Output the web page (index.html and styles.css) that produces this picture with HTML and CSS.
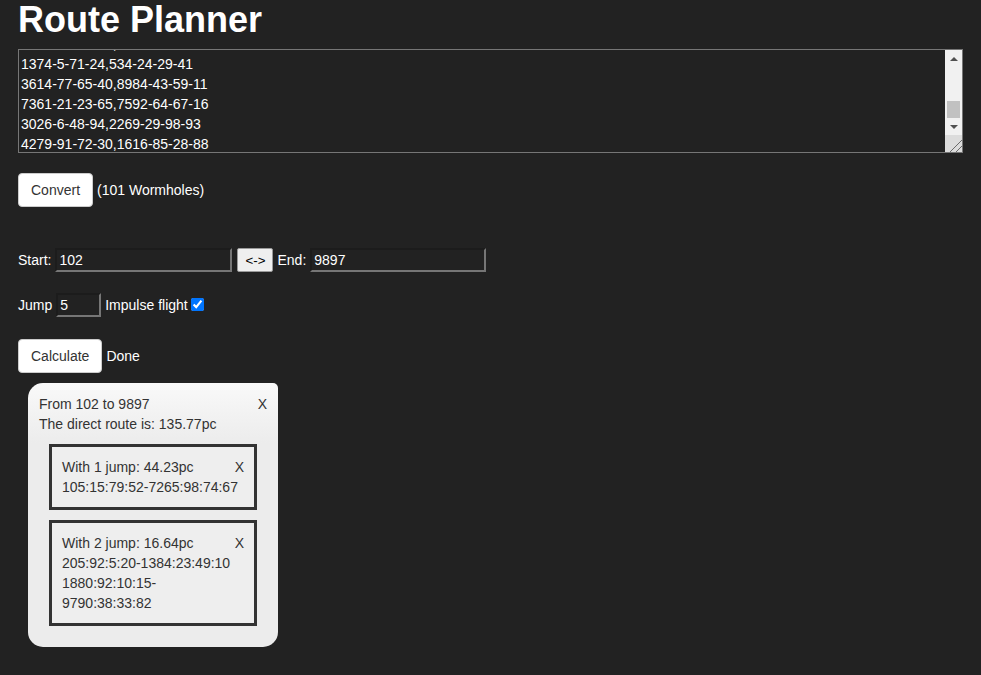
FILE: index.html
```html
<!DOCTYPE html>
<html lang="en">
<head>
<meta charset="utf-8">
<title>Route Planner</title>
<link rel="stylesheet" href="styles.css">
</head>
<body>
<h1 class="title">Route Planner</h1>
<div class="ta-wrap">
<textarea class="wormholes" spellcheck="false">5531-12-44-87,2290-61-03-55
8812-40-17-29,1043-77-92-36
6205-83-58-11,4718-26-39-70
2967-05-66-48,9134-52-81-07
3380-91-24-63,7756-18-45-92
1249-37-80-16,6602-94-13-58
9471-62-09-35,2815-41-76-23
4053-28-97-74,8390-65-30-49
7718-14-53-86,1547-89-22-61
2634-79-41-02,5981-33-68-14
8126-56-85-30,3472-07-59-88
5309-43-12-97,9264-71-36-25
1795-88-64-51,4033-19-90-42
6642-25-37-09,7128-56-04-83
3987-70-81-26,2556-38-47-71
9215-04-29-68,6891-82-15-37
4468-97-72-43,1307-24-63-90
7031-31-06-85,8745-67-98-12
2580-59-48-17,5196-03-26-64
8853-16-93-54,3629-95-71-08
1162-84-25-79,7480-49-37-96
5727-42-60-33,9912-11-84-57
3046-69-14-92,6275-76-52-20
9598-27-87-65,2139-58-09-43
4351-93-38-06,8017-35-66-81
7884-08-71-40,4562-87-23-19
2209-66-52-97,1698-14-80-62
6637-21-19-74,9341-72-45-05
1473-75-96-28,5827-29-61-93
8095-50-33-61,3754-96-18-47
3822-13-67-84,7203-45-94-26
5168-86-45-19,2476-63-37-70
9740-39-08-52,6089-08-75-34
4587-64-82-37,8632-51-14-99
1374-5-71-24,534-24-29-41
3614-77-65-40,8984-43-59-11
7361-21-23-65,7592-64-67-16
3026-6-48-94,2269-29-98-93
4279-91-72-30,1616-85-28-88</textarea>
<div class="vscroll" aria-hidden="true">
  <span class="sb-btn sb-up"></span>
  <span class="sb-track"><span class="sb-thumb"></span></span>
  <span class="sb-btn sb-down"></span>
  <span class="sb-corner"></span>
</div>
</div>

<div class="row convert-row">
  <button class="btn" type="button">Convert</button>
  <span class="info">(101 Wormholes)</span>
</div>

<div class="row endpoints">
  <label class="field-label" for="start">Start:</label>
  <input class="text-input wide" id="start" type="text" value="102">
  <button class="swap" type="button">&lt;-&gt;</button>
  <label class="field-label" for="end">End:</label>
  <input class="text-input wide end" id="end" type="text" value="9897">
</div>

<div class="row jump-row">
  <label class="field-label" for="jump">Jump</label>
  <input class="text-input narrow" id="jump" type="text" value="5">
  <label class="impulse">Impulse flight<input class="check" type="checkbox" checked></label>
</div>

<div class="row calc-row">
  <button class="btn" type="button">Calculate</button>
  <span class="info">Done</span>
</div>

<div class="result">
  <div class="result-head">
    <span class="close">X</span>
    <div>From 102 to 9897</div>
    <div>The direct route is: 135.77pc</div>
  </div>
  <div class="route">
    <span class="close">X</span>
    <div>With 1 jump: 44.23pc</div>
    <div>105:15:79:52-7265:98:74:67</div>
  </div>
  <div class="route">
    <span class="close">X</span>
    <div>With 2 jump: 16.64pc</div>
    <div>205:92:5:20-1384:23:49:10 1880:92:10:15-9790:38:33:82</div>
  </div>
</div>
<script src="script.js"></script>
</body>
</html>
```

FILE: styles.css
```css
html, body {
  background: #222222;
}
body {
  margin: 0;
  padding: 0 18px;
  color: #ffffff;
  font-family: "Liberation Sans", Arial, sans-serif;
  font-size: 14px;
  line-height: 20px;
}
.title {
  margin: 0;
  font-size: 36px;
  line-height: 40px;
  font-weight: bold;
}
.ta-wrap {
  position: relative;
  margin-top: 9px;
}
.wormholes {
  display: block;
  box-sizing: border-box;
  width: 100%;
  height: 104px;
  margin: 0;
  padding: 1px 19px 0 2px;
  border: 1px solid #767676;
  background: #222222;
  color: #ffffff;
  font-family: "Liberation Sans", Arial, sans-serif;
  font-size: 14px;
  line-height: 20px;
  white-space: pre;
  overflow-y: scroll;
  scrollbar-width: none;
  resize: none;
}
.vscroll {
  position: absolute;
  top: 1px;
  right: 1px;
  bottom: 1px;
  width: 17px;
  display: flex;
  flex-direction: column;
  background: #f1f1f1;
}
.sb-btn {
  display: flex;
  align-items: center;
  justify-content: center;
  flex: none;
}
.sb-up {
  height: 16px;
}
.sb-down {
  height: 17px;
}
.sb-up::before {
  content: "";
  width: 0;
  height: 0;
  border-left: 4px solid transparent;
  border-right: 4px solid transparent;
  border-bottom: 4px solid #505050;
  margin-top: 1px;
}
.sb-down::before {
  content: "";
  width: 0;
  height: 0;
  border-left: 4px solid transparent;
  border-right: 4px solid transparent;
  border-top: 4px solid #505050;
}
.sb-track {
  flex: 1;
  display: flex;
  flex-direction: column;
  justify-content: flex-end;
}
.sb-thumb {
  height: 17px;
  margin: 0 2px;
  background: #c1c1c1;
}
.sb-corner {
  flex: none;
  height: 17px;
  background-color: #dcdcdc;
  background-image: linear-gradient(to bottom right,
    transparent 0 62%, #6a6a6a 62% 66%, transparent 66% 80%, #6a6a6a 80% 84%, transparent 84%);
}
.row {
  display: flex;
  align-items: center;
  gap: 4px;
}
.convert-row {
  margin-top: 20px;
}
.endpoints {
  margin-top: 41px;
}
.jump-row {
  margin-top: 21px;
}
.calc-row {
  margin-top: 22px;
}
.btn {
  box-sizing: border-box;
  height: 34px;
  padding: 6px 12px;
  border: 1px solid #cccccc;
  border-radius: 4px;
  background: #ffffff;
  color: #333333;
  font-family: "Liberation Sans", Arial, sans-serif;
  font-size: 14px;
  line-height: 20px;
}
.info, .field-label, .impulse {
  color: #ffffff;
}
.text-input {
  box-sizing: border-box;
  height: 24px;
  margin: 0;
  padding: 1px 2px;
  border-width: 2px;
  border-style: solid;
  border-color: #1c1c1c #767676 #767676 #1c1c1c;
  background: #222222;
  color: #ffffff;
  font-family: "Liberation Sans", Arial, sans-serif;
  font-size: 14px;
}
.wide {
  width: 177px;
}
.wide.end {
  width: 176px;
}
.narrow {
  width: 45px;
}
.swap {
  box-sizing: border-box;
  width: 36px;
  height: 24px;
  margin: 0 0 0 1px;
  padding: 1px 6px;
  border: 1px solid #9a9a9a;
  border-radius: 2px;
  background: #efefef;
  color: #000000;
  font-family: "Liberation Sans", Arial, sans-serif;
  font-size: 13.33px;
}
.impulse {
  display: flex;
  align-items: center;
}
.check {
  width: 13px;
  height: 13px;
  margin: 0 0 2px 3px;
}
.result {
  box-sizing: border-box;
  width: 250px;
  margin: 10px 0 0 10px;
  padding: 11px;
  border-radius: 15px 5px 15px 15px;
  background: linear-gradient(to bottom, #f9f9f9 0, #ececec 60px, #ececec 100%);
  color: #333333;
}
.close {
  float: right;
  color: #333333;
}
.route {
  margin: 10px;
  padding: 10px;
  border: 3px solid #333333;
  background: #eeeeee;
}
```

FILE: script.js
```js
var wormholes = document.querySelector('.wormholes');
wormholes.scrollTop = wormholes.scrollHeight - wormholes.clientHeight - 2;
```
